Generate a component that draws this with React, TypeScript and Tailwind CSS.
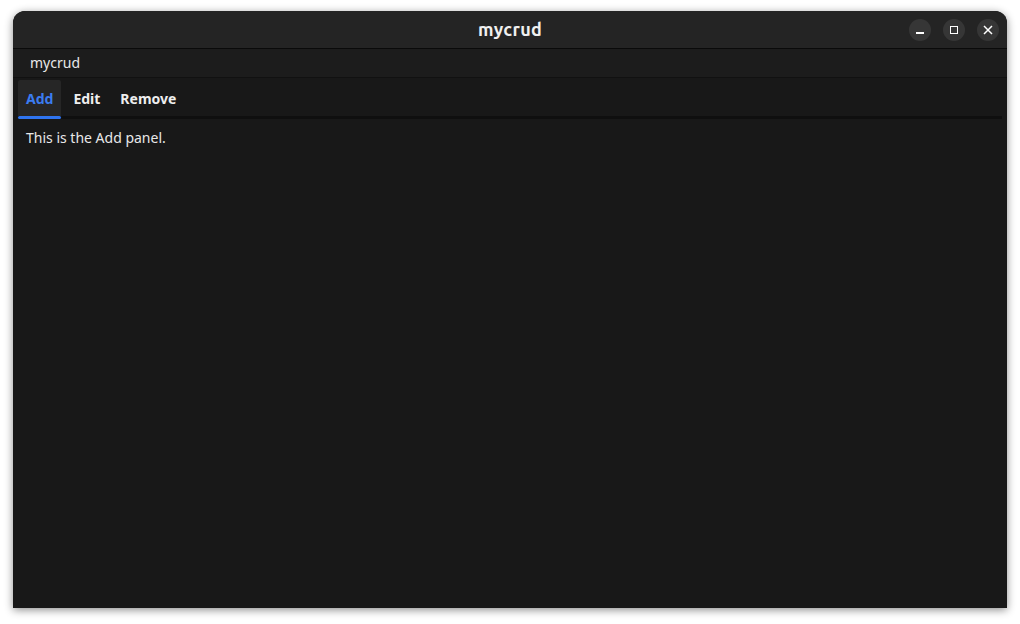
import React from "react";

export default function App() {
  return (
    <div className="w-[1020px] h-[624px] bg-white relative" style={{ fontFamily: '"Noto Sans", "Open Sans", sans-serif' }}>
      <div className="absolute left-[13px] top-[11px] w-[994px] h-[597px] rounded-t-[12px] bg-[#181818] flex flex-col overflow-hidden shadow-[0_2px_8px_rgba(0,0,0,0.45)]">
        <div className="h-[37px] bg-[#242424] flex items-center justify-center relative shrink-0">
          <span className="text-[18px] font-bold text-[#f0f0f0] leading-none tracking-[0.3px] mt-[-1px]" style={{ fontFamily: 'Ubuntu, "Noto Sans", sans-serif' }}>mycrud</span>
          <div className="absolute right-[8px] top-[8px] flex gap-[12px]">
            <div className="w-[22px] h-[22px] rounded-full bg-[#363636] flex items-center justify-center">
              <div className="w-[8px] h-[1.5px] bg-white mt-[6px]" />
            </div>
            <div className="w-[22px] h-[22px] rounded-full bg-[#363636] flex items-center justify-center">
              <div className="w-[8px] h-[8px] border-[1.5px] border-white" />
            </div>
            <div className="w-[22px] h-[22px] rounded-full bg-[#363636] flex items-center justify-center">
              <svg width="10" height="10" viewBox="0 0 10 10"><path d="M1 1L9 9M9 1L1 9" stroke="white" strokeWidth="1.5" /></svg>
            </div>
          </div>
        </div>
        <div className="h-px bg-[#0a0a0a] shrink-0" />
        <div className="h-[28px] bg-[#1c1c1c] flex items-center pl-[17px] pb-[2px] shrink-0">
          <span className="text-[14px] text-[#e8e8e8]">mycrud</span>
        </div>
        <div className="h-px bg-[#111111] shrink-0" />
        <div className="px-[5px] pt-[2px] shrink-0">
          <div className="flex gap-[4px] border-b-[3px] border-[#0f0f0f] h-[39px]">
            <div className="relative h-[36px] px-[8px] bg-[#262626] rounded-t-[2px] flex items-center justify-center">
              <span className="text-[14px] font-bold text-[#3b7cf0]">Add</span>
              <div className="absolute left-0 right-0 bottom-[-3px] h-[3px] rounded-full bg-[#2f74f0]" />
            </div>
            <div className="h-[36px] px-[8px] flex items-center">
              <span className="text-[14px] font-bold text-[#eeeeee]">Edit</span>
            </div>
            <div className="h-[36px] px-[8px] flex items-center">
              <span className="text-[14px] font-bold text-[#eeeeee]">Remove</span>
            </div>
          </div>
        </div>
        <div className="px-[13px] pt-[6px]">
          <span className="text-[14px] text-[#e8e8e8]">This is the Add panel.</span>
        </div>
      </div>
    </div>
  );
}
